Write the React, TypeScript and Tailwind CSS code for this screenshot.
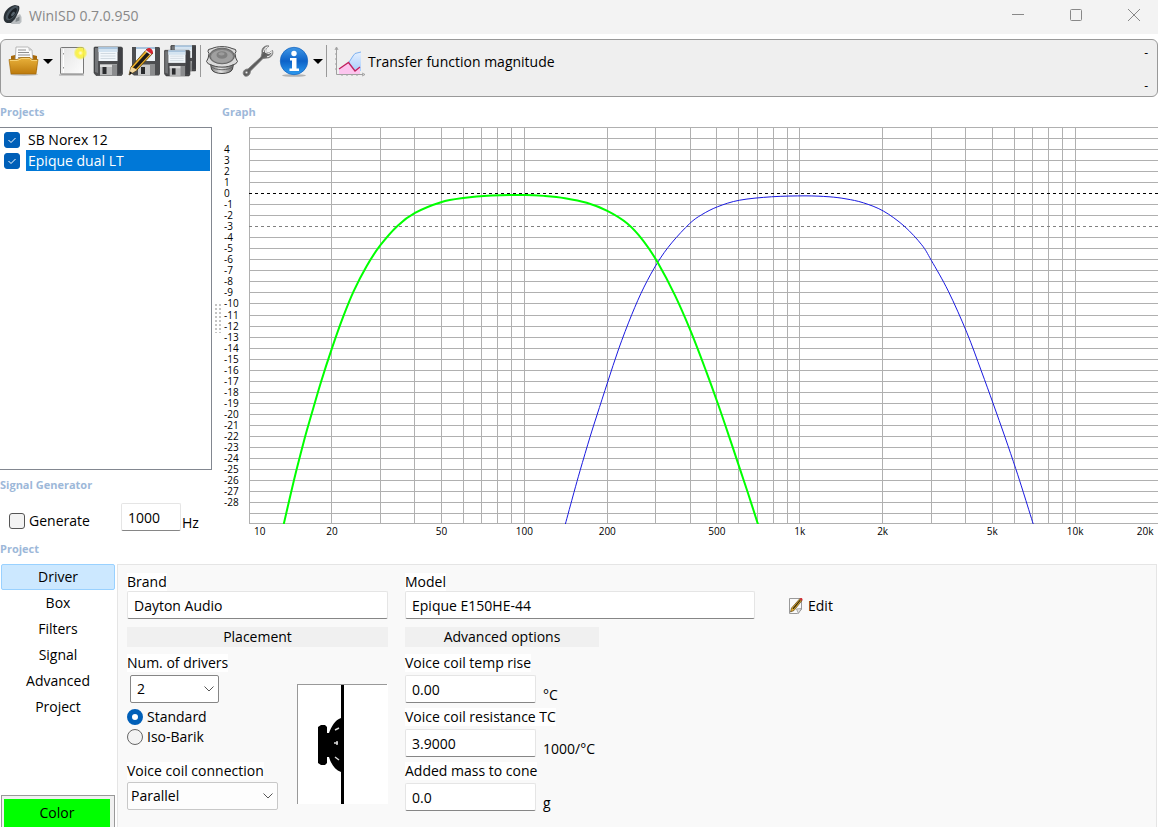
import { useId, useState, type ReactNode } from "react";
import clsx from "clsx";

type Point = [number, number];

interface Project {
  id: number;
  name: string;
  color: string;
  strokeWidth: number;
  curve: Point[];
}

// curves are sampled on a 909 x 396 plot: 10 Hz .. 20 kHz, +6 dB .. -30 dB
const PLOT_W = 909;
const PLOT_H = 396;

const PROJECTS: Project[] = [
  {
    id: 1,
    name: "SB Norex 12",
    color: "#1a1ae0",
    strokeWidth: 1,
    curve: [
      [316.3, 396.3], [325, 364.3], [331.2, 342.3], [341, 309.3], [348, 287.3], [358.7, 254.3],
      [369.7, 221.3], [382.7, 187.3], [395, 159.7], [408.7, 135], [422.7, 115.6], [440.7, 96.3],
      [452.7, 87.5], [468.7, 79.5], [490.7, 73], [522.7, 69.6], [556, 68.7], [580, 69.6],
      [597, 71.7], [614.3, 75.6], [634.3, 83.8], [655, 98.7], [672.7, 117.5], [682.3, 133],
      [699.3, 163.7], [717.7, 204.7], [732.3, 243.3], [744.3, 276.3], [756, 309.3],
      [766.7, 340.7], [774.3, 364.3], [784.3, 396.3],
    ],
  },
  {
    id: 2,
    name: "Epique dual LT",
    color: "#00ff00",
    strokeWidth: 2,
    curve: [
      [34.7, 396.3], [42, 364.8], [47.4, 342.3], [56, 309.3], [62.3, 287.3], [72, 254.3],
      [83, 220.6], [94.3, 189], [104.7, 163.7], [117.3, 139.3], [131, 118.4], [148.7, 98.4],
      [166, 85.7], [192, 75], [214.3, 70.8], [242.7, 68.4], [276, 67.8], [296, 68.8],
      [316, 71], [337.7, 75.6], [358.3, 83.7], [378.3, 96.3], [394.7, 114], [409, 135.7],
      [426, 168], [441.7, 203.7], [457, 243.3], [469, 276.3], [480.3, 309.3], [491.3, 342.3],
      [498.7, 364.3], [509, 396.3],
    ],
  },
];

const TABS = ["Driver", "Box", "Filters", "Signal", "Advanced", "Project"];

const FREQ_LABELS = [
  { hz: 20, text: "20" },
  { hz: 50, text: "50" },
  { hz: 100, text: "100" },
  { hz: 200, text: "200" },
  { hz: 500, text: "500" },
  { hz: 1000, text: "1k" },
  { hz: 2000, text: "2k" },
  { hz: 5000, text: "5k" },
  { hz: 10000, text: "10k" },
];

const DB_LINES = Array.from({ length: 35 }, (_, i) => 5 - i);
const FREQ_LINES = [10, 100, 1000, 10000]
  .flatMap((d) => [1, 2, 3, 4, 5, 6, 7, 8, 9].map((n) => n * d))
  .filter((f) => f > 10 && f < 20000);

const freqToPct = (hz: number) => `${(Math.log10(hz / 10) / Math.log10(2000)) * 100}%`;
const dbToY = (db: number) => Math.round((6 - db) * 11.03) + 0.5;

// Catmull-Rom spline through the samples
function smoothPath(pts: Point[]) {
  let d = `M${pts[0][0]} ${pts[0][1]}`;
  for (let i = 0; i < pts.length - 1; i++) {
    const p0 = pts[i - 1] ?? pts[i];
    const p1 = pts[i];
    const p2 = pts[i + 1];
    const p3 = pts[i + 2] ?? p2;
    d += `C${p1[0] + (p2[0] - p0[0]) / 6} ${p1[1] + (p2[1] - p0[1]) / 6} ${p2[0] - (p3[0] - p1[0]) / 6} ${p2[1] - (p3[1] - p1[1]) / 6} ${p2[0]} ${p2[1]}`;
  }
  return d;
}

/* ---------- icons ---------- */

function AppIcon() {
  return (
    <svg viewBox="0 0 20 20" className="h-5 w-5" aria-hidden="true">
      <path d="M11 12l6-3 1.500 3v5l-2 2H8z" fill="#b9bdc0" />
      <path d="M13 13.500l3.500-2v4l-4 1.500z" fill="#7d8488" />
      <path d="M4 18C1 17 0 14 1 10 2 5 7 1 12 0l4 1c1 2 0 5-1 7l-3 6-4 4z" fill="#2b3238" />
      <ellipse cx="9" cy="8" rx="4" ry="8.500" transform="rotate(38 9 8)" fill="#46525c" />
      <ellipse cx="9.500" cy="8.500" rx="2.600" ry="6.500" transform="rotate(38 9.500 8.500)" fill="#1a2026" />
      <ellipse cx="10" cy="9" rx="1.400" ry="2.600" transform="rotate(38 10 9)" fill="#56636d" />
    </svg>
  );
}

function FolderIcon() {
  return (
    <svg viewBox="0 0 32 32" className="h-8 w-8" aria-hidden="true">
      <defs>
        <linearGradient id="folder" x1="0" y1="0" x2="0" y2="1">
          <stop offset="0" stopColor="#e9b23c" />
          <stop offset="1" stopColor="#bd7a0c" />
        </linearGradient>
      </defs>
      <ellipse cx="16" cy="29.500" rx="14" ry="1.500" fill="#000" opacity=".18" />
      <path d="M3 11l4-1h18l4 1v14H3z" fill="#a8690a" />
      <path d="M8 2h12l4 3 1 13H7z" fill="#fbfbfb" stroke="#aaa" strokeWidth=".8" />
      <path d="M20 2l1 4 3-1z" fill="#c8c8c8" />
      <path d="M10 5h8M10 7.500h11M10 10h12M10 12.500h12" stroke="#8f8f8f" strokeWidth="1" />
      <path d="M1 14.500h8l4-2h9l2 2h6l-2 14.500H3z" fill="url(#folder)" stroke="#a56b0c" strokeWidth=".7" />
      <path d="M2 15.500h7.500l4-2h8l2 2h5.500" stroke="#f8d77f" strokeWidth=".9" fill="none" />
    </svg>
  );
}

function NewIcon() {
  return (
    <svg viewBox="0 0 32 32" className="h-8 w-8" aria-hidden="true">
      <defs>
        <radialGradient id="glow">
          <stop offset="0" stopColor="#fffbe0" />
          <stop offset=".35" stopColor="#fff34a" />
          <stop offset=".7" stopColor="#f6f03a" stopOpacity=".8" />
          <stop offset="1" stopColor="#f6f03a" stopOpacity="0" />
        </radialGradient>
        <linearGradient id="paper" x1="0" y1="0" x2="1" y2="1">
          <stop offset="0" stopColor="#e4e4e4" />
          <stop offset="1" stopColor="#fdfdfd" />
        </linearGradient>
      </defs>
      <path d="M3 30h25" stroke="#000" strokeWidth="1.500" opacity=".2" />
      <rect x="4.500" y="2.500" width="23" height="26.500" rx="1" fill="url(#paper)" stroke="#777" />
      <path d="M7.500 4v24" stroke="#fff" />
      <path d="M7.500 8v1.500M7.500 22v1.500" stroke="#999" />
      <circle cx="24.500" cy="8" r="7" fill="url(#glow)" />
    </svg>
  );
}

function Floppy() {
  return (
    <>
      <path d="M2.500 2h27l1 1v26l-1 1.500H4L2 28V3z" fill="#4c4d50" stroke="#2e2f31" strokeWidth=".6" />
      <path d="M3 3h3v25l-3-1z" fill="#747679" />
      <path d="M26 3h4v25l-4 1z" fill="#3f4044" />
      <path d="M6.500 2h19v14h-19z" fill="#f2f7fb" />
      <path d="M6.500 2h19v2h-19z" fill="#a9c4dd" />
      <path d="M6.500 4h19v3h-19z" fill="#d3e3f0" />
      <path d="M8.500 8.500h15M8.500 11h15M8.500 13.500h15" stroke="#cdd6de" strokeWidth=".9" />
      <path d="M8 19.500h17v11H8z" fill="#b9babb" />
      <path d="M8 19.500h17v2.500H8z" fill="#dedede" />
      <path d="M10.500 22h4v7h-4z" fill="#292a2d" />
      <path d="M20 19.500h5v11h-5z" fill="#8b8c8e" />
    </>
  );
}

function SaveIcon() {
  return (
    <svg viewBox="0 0 32 32" className="h-8 w-8" aria-hidden="true">
      <Floppy />
    </svg>
  );
}

function SaveAsIcon() {
  return (
    <svg viewBox="0 0 32 32" className="h-8 w-8" aria-hidden="true">
      <g transform="translate(4 0)">
        <path d="M0 2h27l1 1v26l-1 1.500H2L0 29z" fill="#4c4d50" />
        <path d="M4 2h19v14H4z" fill="#eef4f9" />
        <path d="M4 2h19v2H4z" fill="#a9c4dd" />
        <path d="M6 19.500h17v11H6z" fill="#c9cacb" />
        <path d="M9 22h4v7H9z" fill="#292a2d" />
        <path d="M18 19.500h5v11h-5z" fill="#8b8c8e" />
      </g>
      <path d="M1 30l2-8L19 4l6 4L9 25z" fill="#f2b52a" stroke="#4b3306" strokeWidth=".8" />
      <path d="M5 22.500L20.500 5.500l3 2L8 24z" fill="#1f1b18" />
      <path d="M3 22l6 3-8 5z" fill="#efd6a2" />
      <path d="M1 30l1-3.500 2.500 1.500z" fill="#111" />
      <path d="M19 4c1-2 6-1 6 4l-2 1.500L17.500 6z" fill="#d52330" />
      <path d="M17.500 5.500l5.500 4" stroke="#e8e8e8" strokeWidth="1.200" />
    </svg>
  );
}

function SaveAllIcon() {
  return (
    <svg viewBox="0 0 32 32" className="h-8 w-8" aria-hidden="true">
      <g transform="translate(5 -1.500) scale(.9)">
        <Floppy />
      </g>
      <g transform="translate(-1.500 3.500) scale(.9)">
        <Floppy />
      </g>
    </svg>
  );
}

function SpeakerIcon() {
  return (
    <svg viewBox="0 0 32 32" className="h-8 w-8" aria-hidden="true">
      <defs>
        <linearGradient id="basket" x1="0" y1="0" x2="1" y2="0">
          <stop offset="0" stopColor="#6d6d6d" />
          <stop offset=".45" stopColor="#e4e4e4" />
          <stop offset="1" stopColor="#5d5d5d" />
        </linearGradient>
      </defs>
      <path d="M3.500 14l2 10c1.500 6 19.500 6 21 0l2-10z" fill="url(#basket)" stroke="#444" />
      <path d="M5 21c3 5 19 5 22 0" stroke="#666" fill="none" />
      <path
        d="M2.500 4.500L6 3.500c5-2.500 15-2.500 20 0l3.500 1 .5 2-1 2 .8 4.500 1.700 3.500-2 2.500-2 .5c-6 3.500-17 3.500-23 0l-2-.5-2-2.500L2.200 13 3 8.500l-1-2z"
        fill="#dadada"
        stroke="#484848"
      />
      <ellipse cx="16" cy="11" rx="12.500" ry="7.800" fill="#7e7e7e" stroke="#555" strokeWidth=".8" />
      <ellipse cx="16" cy="11.500" rx="11" ry="6.500" fill="#a0a0a0" />
      <ellipse cx="16" cy="10" rx="5.500" ry="3.800" fill="#808080" />
      <ellipse cx="15.500" cy="8.800" rx="3" ry="1.600" fill="#9c9c9c" />
    </svg>
  );
}

function WrenchIcon() {
  return (
    <svg viewBox="0 0 32 32" className="h-8 w-8" aria-hidden="true">
      <defs>
        <linearGradient id="steel" x1="0" y1="0" x2="1" y2="1">
          <stop offset="0" stopColor="#d9d9d9" />
          <stop offset=".5" stopColor="#5b5b5b" />
          <stop offset="1" stopColor="#c4c4c4" />
        </linearGradient>
      </defs>
      <path
        d="M27 1c-4-1-8 2-7 7l-1 4L6 24c-4 0-5.500 3-4.500 5.500s5 2.500 6.500-1l.5-2.500L21 13.500l4-.5c4 0 7-4 5.500-7.500L27 8l-3.500-1L24 3.500z"
        fill="url(#steel)"
        stroke="#777"
        strokeWidth=".8"
      />
      <path d="M21.500 7c0-2.500 1.500-4.500 4-5.200L23 3.500l.5 4L27 8.500l3-2c0 3-2 5-5 5.300" fill="none" stroke="#f3f3f3" />
      <circle cx="4.500" cy="27.500" r="1.300" fill="#efefef" stroke="#666" strokeWidth=".7" />
    </svg>
  );
}

function InfoIcon() {
  return (
    <svg viewBox="0 0 32 32" className="h-8 w-8" aria-hidden="true">
      <defs>
        <linearGradient id="info" x1="0" y1="0" x2="0" y2="1">
          <stop offset="0" stopColor="#3f97e6" />
          <stop offset=".5" stopColor="#0d62c8" />
          <stop offset="1" stopColor="#2d9cf0" />
        </linearGradient>
      </defs>
      <ellipse cx="16" cy="30.500" rx="12" ry="1.300" fill="#000" opacity=".25" />
      <circle cx="16" cy="16" r="13.700" fill="url(#info)" stroke="#1c68c0" strokeWidth=".8" />
      <circle cx="16" cy="8.500" r="2.700" fill="#fff" />
      <path d="M12 13h6.500v10.500H21V26h-9.500v-2.500h2.500v-8h-2z" fill="#fff" />
    </svg>
  );
}

function ChartIcon() {
  return (
    <svg viewBox="0 0 32 32" className="h-8 w-8" aria-hidden="true">
      <defs>
        <linearGradient id="area" x1="0" y1="0" x2="0" y2="1">
          <stop offset="0" stopColor="#e3efff" />
          <stop offset="1" stopColor="#a9cdfb" />
        </linearGradient>
      </defs>
      <path d="M14.500 18l4-7 2.500-2 6-1.500V26H16z" fill="url(#area)" />
      <path d="M5 24l9.500-6.500L21 26l5-4v7H5z" fill="#fcc5ee" />
      <path d="M14.500 18l4.500-7 2-2.500 6-1.500" fill="none" stroke="#7db2f2" />
      <path d="M5 24l9.500-6.500L21 26l5-4" fill="none" stroke="#c0215f" strokeWidth="1.300" />
      <path d="M2.500 3v26.500H29" fill="none" stroke="#a0a0a0" />
      <path d="M1 5l1.500-3L4 5M28 28l3 1.500-3 1.500M1 9h2M1 14h2M1 19h2M1 24h2M8 29v2M13 29v2M18 29v2M23 29v2" fill="none" stroke="#a0a0a0" />
    </svg>
  );
}

function EditIcon() {
  return (
    <svg viewBox="0 0 16 18" className="h-[18px] w-4" aria-hidden="true">
      <path d="M1.500 1.500h12v11l-4 4h-8z" fill="#fafafa" stroke="#9a9a9a" />
      <path d="M13.500 11.500l-5 .500 2 4.500z" fill="#e3e3e3" stroke="#8a8a8a" strokeWidth=".7" />
      <path d="M2.500 15l1-4L11.500 2l2.500 1.500L6 13.500z" fill="#e6b030" stroke="#443008" strokeWidth=".6" />
      <path d="M4.500 11.500L11.700 3l1 .600L5.500 12.300z" fill="#2c2410" />
      <path d="M11.500 2c.5-1.500 3-1.500 3 .5L14 4z" fill="#d12c33" />
    </svg>
  );
}

function DriverDrawing() {
  return (
    <svg viewBox="0 0 91 120" className="h-[120px] w-[91px] bg-white" role="img" aria-label="Driver placement">
      <path d="M0 .5h90M.5 0v120" stroke="#999" />
      <path d="M44 1h3v119h-3z" />
      <path d="M21 43l3-2h4l2 2v6h2c2-6 6-13 12-15v54c-6-2-10-8-12-15h-2v6l-2 2h-4l-3-2z" />
      <path d="M38 46l4-2M37 59h4M40 57v4M38 73l4 3" stroke="#d8d8d8" strokeWidth="1.500" />
    </svg>
  );
}

function Chevron() {
  return (
    <svg viewBox="0 0 10 6" className="pointer-events-none absolute top-[11px] right-[5px] h-1.5 w-2.5" aria-hidden="true">
      <path d="M.5 .5L5 5L9.500 .5" fill="none" stroke="#555" />
    </svg>
  );
}

/* ---------- controls ---------- */

function ToolButton({ label, children }: { label: string; children: ReactNode }) {
  return (
    <button type="button" aria-label={label} className="h-8 w-8">
      {children}
    </button>
  );
}

function DropArrow({ label }: { label: string }) {
  return (
    <button type="button" aria-label={label} className="flex h-8 w-4 items-center justify-center">
      <svg viewBox="0 0 10 5" className="h-[5px] w-2.5" aria-hidden="true">
        <path d="M0 0h10L5 5z" />
      </svg>
    </button>
  );
}

function CheckBox({ id, checked, onChange }: { id: string; checked: boolean; onChange: () => void }) {
  return (
    <span className="grid h-4 w-4 shrink-0">
      <input
        id={id}
        type="checkbox"
        checked={checked}
        onChange={onChange}
        className="col-start-1 row-start-1 h-4 w-4 appearance-none rounded-[3px] border border-[#555] bg-[#f3f3f3] checked:border-[#005fb8] checked:bg-[#005fb8]"
      />
      {checked && (
        <svg viewBox="0 0 16 16" className="pointer-events-none col-start-1 row-start-1" aria-hidden="true">
          <path d="M4.500 8l2.500 2.500 4.500-4.500" fill="none" stroke="#fff" />
        </svg>
      )}
    </span>
  );
}

function GroupTitle({ children }: { children: ReactNode }) {
  return <h2 className="text-[11px] leading-[30px] font-bold text-[#9db8d9]">{children}</h2>;
}

const labelClass = "block w-fit bg-white leading-[18px]";
const inputClass =
  "h-7 rounded-[2px] border border-[#e5e5e5] border-b-[#868686] bg-white px-1.5 text-sm outline-none";

interface FieldProps {
  label: string;
  value: string;
  unit?: string;
  spaced?: boolean;
  className?: string;
}

function Field({ label, value, unit, spaced, className }: FieldProps) {
  const id = useId();
  return (
    <div className={clsx("flex flex-col", spaced && "gap-[3px]")}>
      <label htmlFor={id} className={labelClass}>{label}</label>
      <div className="flex h-7 gap-[7px]">
        <input id={id} defaultValue={value} className={clsx(inputClass, className)} />
        {unit && <span className="pt-2.5 leading-5">{unit}</span>}
      </div>
    </div>
  );
}

function Graph() {
  return (
    <div className="flex h-[407px] text-[10px]">
      <svg className="h-full w-[27px] shrink-0 overflow-visible" aria-hidden="true">
        {DB_LINES.filter((db) => db <= 4 && db >= -28).map((db) => (
          <text key={db} x="2" y={dbToY(db) + 3.5}>{db}</text>
        ))}
      </svg>
      <svg className="h-full min-w-0 flex-1 overflow-visible" role="img" aria-label="Transfer function magnitude">
        <g stroke="#b0b0b0" shapeRendering="crispEdges">
          <line x1="0.5" y1="0" x2="0.5" y2={PLOT_H + 1} />
          <line x1="0" y1="0.5" x2="100%" y2="0.5" />
          {FREQ_LINES.map((f) => (
            <line key={f} x1={freqToPct(f)} x2={freqToPct(f)} y1="0" y2={PLOT_H} />
          ))}
          {DB_LINES.filter((db) => db !== 0 && db !== -3).map((db) => (
            <line key={db} x1="0" x2="100%" y1={dbToY(db)} y2={dbToY(db)} />
          ))}
          <line x1="0" y1={PLOT_H + 0.5} x2="100%" y2={PLOT_H + 0.5} />
          <line x1="0" x2="100%" y1={dbToY(0)} y2={dbToY(0)} stroke="#000" strokeDasharray="3 3" />
          <line x1="0" x2="100%" y1={dbToY(-3)} y2={dbToY(-3)} stroke="#808080" strokeDasharray="3 3" />
        </g>
        <svg width="100%" height={PLOT_H + 1} viewBox={`0 0 ${PLOT_W} ${PLOT_H}`} preserveAspectRatio="none">
          {PROJECTS.map((p) => (
            <path
              key={p.id}
              d={smoothPath(p.curve)}
              fill="none"
              stroke={p.color}
              strokeWidth={p.strokeWidth}
              vectorEffect="non-scaling-stroke"
            />
          ))}
        </svg>
        <text x="5" y="408">10</text>
        {FREQ_LABELS.map(({ hz, text }) => (
          <text key={hz} x={freqToPct(hz)} y="408" textAnchor="middle">{text}</text>
        ))}
        <text x="99.5%" y="408" textAnchor="end">20k</text>
      </svg>
    </div>
  );
}

function DriverPanel() {
  const [placement, setPlacement] = useState("Standard");

  return (
    <section className="flex min-w-0 flex-1 border border-b-0 border-[#e5e5e5] bg-[#f9f9f9] pt-2 pl-[9px]">
      <div className="w-[261px]">
        <Field label="Brand" value="Dayton Audio" className="w-[261px]" />
        <h3 className="mt-2 bg-[#f0f0f0] text-center leading-5">Placement</h3>
        <div className="mt-[7px] flex justify-between">
          <div>
            <label htmlFor="num-drivers" className={labelClass}>Num. of drivers</label>
            <div className="relative mt-[3px] ml-[3px] w-[89px]">
              <select
                id="num-drivers"
                defaultValue="2"
                className="h-7 w-full appearance-none rounded-[2px] border border-[#868686] bg-white pl-1.5"
              >
                <option>1</option>
                <option>2</option>
                <option>4</option>
              </select>
              <Chevron />
            </div>
            <div className="mt-1">
              {["Standard", "Iso-Barik"].map((name) => (
                <label key={name} className="flex h-5 items-center gap-1">
                  <input
                    type="radio"
                    name="placement"
                    checked={placement === name}
                    onChange={() => setPlacement(name)}
                    className="h-4 w-4 appearance-none rounded-full border border-[#666] bg-[#f3f3f3] checked:border-[5px] checked:border-[#005fb8] checked:bg-white"
                  />
                  {name}
                </label>
              ))}
            </div>
            <label htmlFor="coil-connection" className={clsx(labelClass, "mt-[15px]")}>Voice coil connection</label>
            <div className="relative mt-0.5 w-[151px]">
              <select
                id="coil-connection"
                defaultValue="Parallel"
                className="h-7 w-full appearance-none rounded-[2px] border border-[#c8c8c8] bg-[#fdfdfd] pl-[3px]"
              >
                <option>Parallel</option>
                <option>Series</option>
              </select>
              <Chevron />
            </div>
          </div>
          <div className="pt-[30px]">
            <DriverDrawing />
          </div>
        </div>
      </div>

      <div className="ml-[17px] w-[350px]">
        <Field label="Model" value="Epique E150HE-44" className="w-[350px]" />
        <h3 className="mt-2 w-[194px] bg-[#f0f0f0] text-center leading-5">Advanced options</h3>
        <div className="mt-[7px] flex flex-col gap-[5px]">
          <Field spaced label="Voice coil temp rise" value="0.00" unit="°C" className="w-[131px]" />
          <Field spaced label="Voice coil resistance TC" value="3.9000" unit="1000/°C" className="w-[131px]" />
          <Field spaced label="Added mass to cone" value="0.0" unit="g" className="w-[131px]" />
        </div>
      </div>

      <button type="button" className="mt-[23px] ml-[33px] flex h-5 items-center gap-1">
        <EditIcon />
        Edit
      </button>
    </section>
  );
}

export default function App() {
  const [checked, setChecked] = useState<number[]>([1, 2]);
  const [selected, setSelected] = useState(2);
  const [generate, setGenerate] = useState(false);
  const [tab, setTab] = useState("Driver");

  const toggle = (id: number) =>
    setChecked((c) => (c.includes(id) ? c.filter((x) => x !== id) : [...c, id]));

  return (
    <div className="flex min-h-screen flex-col bg-white font-['Open_Sans','Noto_Sans',sans-serif] text-sm text-black">
      <header className="flex h-[34px] items-center bg-[#f3f3f3] pr-3 pb-1 pl-[3px]">
        <AppIcon />
        <h1 className="ml-1.5 pt-0.5 text-[#888]">WinISD 0.7.0.950</h1>
        <div className="ml-auto flex gap-[34px]">
          <button type="button" aria-label="Minimize" className="flex h-6 w-6 items-center justify-center">
            <svg viewBox="0 0 12 12" className="h-3 w-3" stroke="#888"><path d="M0 5.500h12" /></svg>
          </button>
          <button type="button" aria-label="Maximize" className="flex h-6 w-6 items-center justify-center">
            <svg viewBox="0 0 12 12" className="h-3 w-3" stroke="#888" fill="none"><rect x=".5" y=".5" width="11" height="11" rx="1" /></svg>
          </button>
          <button type="button" aria-label="Close" className="flex h-6 w-6 items-center justify-center">
            <svg viewBox="0 0 12 12" className="h-3 w-3" stroke="#888"><path d="M0 0l12 12M12 0L0 12" /></svg>
          </button>
        </div>
      </header>

      <div className="mt-[5px] flex h-[58px] items-start rounded-md border border-[#999] bg-[#efefef] pt-[5px] pr-[9px] pl-[7px]">
        <ToolButton label="Open project"><FolderIcon /></ToolButton>
        <DropArrow label="Recent projects" />
        <div className="flex gap-1">
          <ToolButton label="New project"><NewIcon /></ToolButton>
          <ToolButton label="Save"><SaveIcon /></ToolButton>
          <ToolButton label="Save as"><SaveAsIcon /></ToolButton>
          <ToolButton label="Save all"><SaveAllIcon /></ToolButton>
        </div>
        <span className="mr-[5px] ml-1 h-8 w-px bg-[#999]" />
        <div className="flex gap-1">
          <ToolButton label="Drivers"><SpeakerIcon /></ToolButton>
          <ToolButton label="Options"><WrenchIcon /></ToolButton>
          <ToolButton label="About"><InfoIcon /></ToolButton>
        </div>
        <DropArrow label="Help menu" />
        <span className="mr-[7px] h-8 w-px bg-[#999]" />
        <button type="button" className="flex h-8 items-center gap-0.5">
          <ChartIcon />
          <span className="pt-0.5">Transfer function magnitude</span>
        </button>
        <div className="ml-auto flex flex-col gap-[13px] text-xs leading-5">
          <span className="-mt-0.5">-</span>
          <span>-</span>
        </div>
      </div>

      <div className="flex">
        <aside className="w-[212px] shrink-0">
          <GroupTitle>Projects</GroupTitle>
          <ul className="h-[343px] border border-l-0 border-[#828790] pt-px pr-px">
            {PROJECTS.map((p) => (
              <li key={p.id} className="flex h-[21px] items-center pl-1">
                <CheckBox id={`project-${p.id}`} checked={checked.includes(p.id)} onChange={() => toggle(p.id)} />
                <label
                  htmlFor={`project-${p.id}`}
                  onClick={() => setSelected(p.id)}
                  className={clsx(
                    "ml-1.5 flex-1 pl-0.5 leading-[21px]",
                    selected === p.id && "bg-[#0078d7] text-white",
                  )}
                >
                  {p.name}
                </label>
              </li>
            ))}
          </ul>
          <GroupTitle>Signal Generator</GroupTitle>
          <div className="mt-[3px] flex h-[31px] pl-[9px]">
            <div className="flex w-28 items-center gap-1 pt-1">
              <CheckBox id="generate" checked={generate} onChange={() => setGenerate(!generate)} />
              <label htmlFor="generate">Generate</label>
            </div>
            <input aria-label="Frequency" defaultValue="1000" className={clsx(inputClass, "w-[60px]")} />
            <span className="ml-px pt-2.5 leading-5">Hz</span>
          </div>
        </aside>

        <div className="flex w-2.5 shrink-0 items-start justify-center pt-[206px]" role="separator">
          <div className="h-[30px] w-[7px] bg-[radial-gradient(#c4c4c4_1px,transparent_1px)] bg-[size:4px_4px]" />
        </div>

        <main className="min-w-0 flex-1">
          <GroupTitle>Graph</GroupTitle>
          <Graph />
        </main>
      </div>

      <GroupTitle>Project</GroupTitle>

      <div className="flex flex-1 pr-px">
        <nav className="flex w-[117px] shrink-0 flex-col pr-0.5 pl-px">
          {TABS.map((t) => (
            <button
              key={t}
              type="button"
              onClick={() => setTab(t)}
              className={clsx(
                "h-[26px] rounded-[2px] border",
                tab === t ? "border-[#99d1ff] bg-[#cce8ff]" : "border-transparent",
              )}
            >
              {t}
            </button>
          ))}
          <button
            type="button"
            className="mt-auto h-8 border border-b-0 border-[#999] bg-[#f0f0f0] pt-[3px] pr-1 pl-0.5"
          >
            <span className="block h-7 bg-[#00ff00] leading-7">Color</span>
          </button>
        </nav>
        <DriverPanel />
      </div>
    </div>
  );
}
